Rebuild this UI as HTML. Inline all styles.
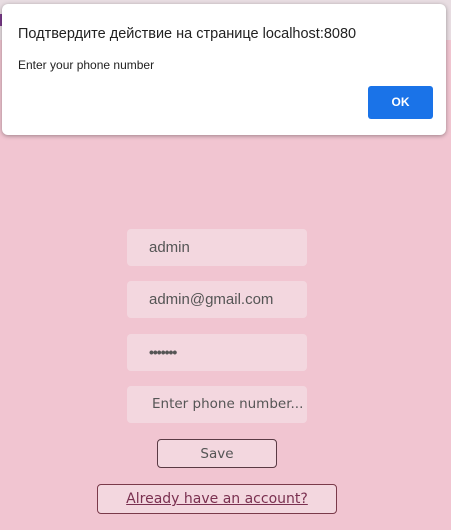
<!DOCTYPE html>
<html><head><meta charset="utf-8"><style>
body{margin:0;width:451px;height:530px;background:#f1c5d1;position:relative;overflow:hidden;font-family:"Liberation Sans",sans-serif}
.top{position:absolute;left:0;top:0;width:451px;height:40px;background:#e8dde2}
.pur{position:absolute;left:0;top:14px;width:3px;height:12px;background:#7a3a8a}
.dlg{position:absolute;left:2px;top:4px;width:444px;height:131px;background:#fff;border-radius:6px;box-shadow:0 1px 4px rgba(0,0,0,.35)}
.t{position:absolute;left:16px;top:22px;font-size:14.5px;color:#222}
.m{position:absolute;left:16px;top:54px;font-size:12px;color:#222}
.ok{position:absolute;left:366px;top:82px;width:65px;height:33px;background:#1a73e8;border-radius:3px;color:#fff;font-size:12px;font-weight:bold;text-align:center;line-height:33px}
.in{position:absolute;left:127px;width:180px;height:37px;background:#f3d7df;border-radius:4px;color:#555;font-size:15px;line-height:37px;box-sizing:border-box;padding-left:22px}
.btn{position:absolute;border:1px solid #5a3a44;border-radius:4px;background:#f3d7df;text-align:center;font-family:"DejaVu Sans",sans-serif;color:#555;font-size:13.5px;box-sizing:border-box}
</style></head><body>
<div class="top"></div><div class="pur"></div>
<div class="dlg"><div class="t">Подтвердите действие на странице localhost:8080</div><div class="m">Enter your phone number</div><div class="ok">OK</div></div>
<div class="in" style="top:229px">admin</div>
<div class="in" style="top:281px">admin@gmail.com</div>
<div class="in" style="top:334px;font-size:14px;font-weight:bold;letter-spacing:-1px">•••••••</div>
<div class="in" style="top:386px;font-family:'DejaVu Sans',sans-serif;font-size:13.5px;padding-left:25px;white-space:nowrap;overflow:hidden">Enter phone number...</div>
<div class="btn" style="left:157px;top:439px;width:120px;height:29px;line-height:29px">Save</div>
<div class="btn" style="left:97px;top:484px;width:240px;height:30px;line-height:29px;font-size:14px;color:#7a3050;border-color:#7a3a4a;text-decoration:underline">Already have an account?</div>
</body></html>
